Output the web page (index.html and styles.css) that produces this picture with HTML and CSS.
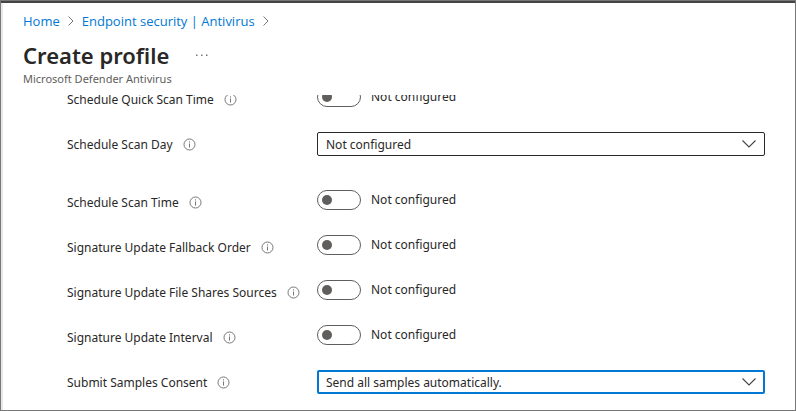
FILE: index.html
```html
<!DOCTYPE html>
<html lang="en">
<head>
<meta charset="utf-8">
<meta name="viewport" content="width=device-width, initial-scale=1">
<title>Create profile</title>
<link rel="stylesheet" href="styles.css">
</head>
<body>
<svg class="sprite" aria-hidden="true">
  <symbol id="info" viewBox="0 0 13 13"><circle cx="6.5" cy="6.5" r="5.5" fill="none" stroke="currentColor"/><path d="M6.5 5.5v4M6.5 3.3v1.2" fill="none" stroke="currentColor"/></symbol>
  <symbol id="crumb" viewBox="0 0 6 10"><path d="M.5.5 5 5 .5 9.5" fill="none" stroke="currentColor"/></symbol>
  <symbol id="down" viewBox="0 0 14 8"><path d="M.5.5 7 7 13.5.5" fill="none" stroke="currentColor" stroke-width="1.1"/></symbol>
</svg>
<div class="window">
  <header class="header">
    <nav class="crumbs" aria-label="Breadcrumb">
      <a href="#">Home</a>
      <svg class="crumb-icon" aria-hidden="true"><use href="#crumb"/></svg>
      <a href="#">Endpoint security | Antivirus</a>
      <svg class="crumb-icon" aria-hidden="true"><use href="#crumb"/></svg>
    </nav>
    <div class="title-row">
      <h1>Create profile</h1>
      <button class="more" type="button" aria-label="More actions"><svg viewBox="0 0 12 2" aria-hidden="true"><path d="M0 .5h1.5V2H0zM5 .5h1.5V2H5zM10 .5h1.5V2H10z" fill="currentColor"/></svg></button>
    </div>
    <p class="subtitle">Microsoft Defender Antivirus</p>
  </header>
  <main class="scroll">
    <form class="settings">
      <div class="row">
        <div class="name"><label for="quick">Schedule Quick Scan Time</label><button class="info" type="button" aria-label="Info"><svg aria-hidden="true"><use href="#info"/></svg></button></div>
        <div class="control"><input class="toggle" type="checkbox" id="quick"><label for="quick">Not configured</label></div>
      </div>
      <div class="row row-spaced">
        <div class="name"><label for="day">Schedule Scan Day</label><button class="info" type="button" aria-label="Info"><svg aria-hidden="true"><use href="#info"/></svg></button></div>
        <div class="control dropdown"><select id="day"><option>Not configured</option></select><svg class="chevron" aria-hidden="true"><use href="#down"/></svg></div>
      </div>
      <div class="row">
        <div class="name"><label for="time">Schedule Scan Time</label><button class="info" type="button" aria-label="Info"><svg aria-hidden="true"><use href="#info"/></svg></button></div>
        <div class="control"><input class="toggle" type="checkbox" id="time"><label for="time">Not configured</label></div>
      </div>
      <div class="row">
        <div class="name"><label for="fallback">Signature Update Fallback Order</label><button class="info" type="button" aria-label="Info"><svg aria-hidden="true"><use href="#info"/></svg></button></div>
        <div class="control"><input class="toggle" type="checkbox" id="fallback"><label for="fallback">Not configured</label></div>
      </div>
      <div class="row">
        <div class="name"><label for="shares">Signature Update File Shares Sources</label><button class="info" type="button" aria-label="Info"><svg aria-hidden="true"><use href="#info"/></svg></button></div>
        <div class="control"><input class="toggle" type="checkbox" id="shares"><label for="shares">Not configured</label></div>
      </div>
      <div class="row">
        <div class="name"><label for="interval">Signature Update Interval</label><button class="info" type="button" aria-label="Info"><svg aria-hidden="true"><use href="#info"/></svg></button></div>
        <div class="control"><input class="toggle" type="checkbox" id="interval"><label for="interval">Not configured</label></div>
      </div>
      <div class="row">
        <div class="name"><label for="consent">Submit Samples Consent</label><button class="info" type="button" aria-label="Info"><svg aria-hidden="true"><use href="#info"/></svg></button></div>
        <div class="control dropdown"><select class="active" id="consent"><option>Send all samples automatically.</option></select><svg class="chevron" aria-hidden="true"><use href="#down"/></svg></div>
      </div>
    </form>
  </main>
</div>
</body>
</html>
```
FILE: styles.css
```css
* { box-sizing: border-box; }

body {
  margin: 0;
  background: #fff;
  color: #292827;
  font: 12px/20px "Noto Sans", "Open Sans", sans-serif;
}

.sprite { display: none; }

.window {
  display: flex;
  flex-direction: column;
  height: 100vh;
  border: 1px solid #777;
  box-shadow: inset 0 2px #444, inset 2px 0 #e8e8e8;
  overflow: hidden;
}

.header { padding: 10px 22px 0; }

.crumbs {
  display: flex;
  align-items: center;
  gap: 8px;
  font-family: "Open Sans", "Noto Sans", sans-serif;
  font-size: 13px;
}

.crumbs a { color: #0078d4; text-decoration: none; }

.crumb-icon { width: 6px; height: 10px; color: #777; }

.title-row {
  display: flex;
  align-items: center;
  gap: 27px;
  padding-top: 8px;
}

h1 {
  margin: 0;
  font-size: 22px;
  font-weight: 600;
  line-height: 32px;
}

button {
  display: flex;
  padding: 0;
  border: 0;
  background: none;
  color: #777;
}

.more svg { width: 12px; height: 2px; }

.subtitle {
  margin: 0;
  color: #605e5c;
  font-size: 11px;
  line-height: 16px;
}

.scroll {
  flex: 1;
  min-height: 0;
  margin-top: 8px;
  overflow: hidden;
}

.settings {
  display: flex;
  flex-direction: column;
  gap: 20px;
  margin-top: -8px;
  padding: 0 30px 0 66px;
}

.row {
  display: grid;
  grid-template-columns: 250px 1fr;
  align-items: start;
  height: 25px;
}

.row-spaced { margin-bottom: 13px; }

.name {
  display: flex;
  align-items: center;
  gap: 10px;
  line-height: 25px;
  white-space: nowrap;
}

.info svg { width: 13px; height: 13px; }

.control {
  display: flex;
  align-items: center;
  gap: 10px;
}

.toggle {
  appearance: none;
  display: flex;
  align-items: center;
  width: 44px;
  height: 20px;
  margin: 0;
  padding: 0 4px;
  border: 1px solid #605e5c;
  border-radius: 10px;
}

.toggle::before {
  content: "";
  width: 10px;
  height: 10px;
  border-radius: 50%;
  background: #605e5c;
}

.toggle:checked { justify-content: flex-end; }

.dropdown { position: relative; }

select {
  appearance: none;
  width: 100%;
  height: 24px;
  padding: 1px 32px 0 8px;
  border: 1px solid #292827;
  border-radius: 2px;
  background: #fff;
  color: inherit;
  font: inherit;
}

select.active {
  padding-left: 7px;
  border: 2px solid #0078d4;
}

.chevron {
  position: absolute;
  right: 9px;
  width: 14px;
  height: 8px;
  color: #444;
  pointer-events: none;
}
```
